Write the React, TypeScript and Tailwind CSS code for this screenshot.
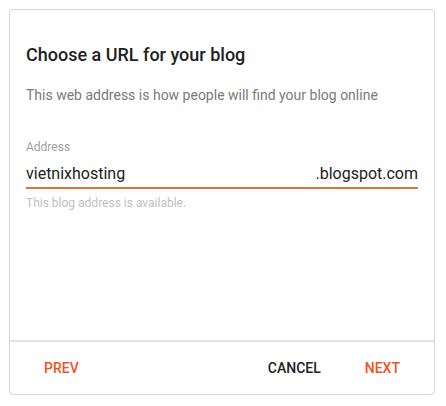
import React from "react";

export default function App() {
  return (
    <div className="w-[446px] h-[406px] bg-white pt-[9px] pl-[9px]" style={{ fontFamily: "Roboto, 'Liberation Sans', sans-serif" }}>
      <div className="w-[426px] h-[386px] border border-[#d6d6d6] rounded-[4px] flex flex-col bg-white">
        <div className="flex-1 pt-[33px] px-4">
          <h1 className="text-[18px] leading-[24px] font-medium text-[#212121]">Choose a URL for your blog</h1>
          <p className="mt-[18px] text-[14px] leading-[20px] text-[#7a7a7a]">This web address is how people will find your blog online</p>
          <div className="mt-[34px] text-[12px] leading-[16px] text-[#a0a0a0]">Address</div>
          <div className="mt-[7px] flex justify-between items-center h-[25px] pb-[1px] text-[16px] leading-[24px] text-[#212121]">
            <span>vietnixhosting</span>
            <span>.blogspot.com</span>
          </div>
          <div className="h-[2px] bg-[#d9763f]" />
          <div className="mt-[6px] text-[12px] leading-[16px] text-[#c0c0c0]">This blog address is available.</div>
        </div>
        <div className="h-[54px] border-t-2 border-[#e4e4e4] flex items-center px-4 text-[14px] leading-[20px] font-medium">
          <button className="px-[18px] text-[#f4511e]">PREV</button>
          <div className="flex-1" />
          <button className="px-[18px] text-[#212121]">CANCEL</button>
          <button className="ml-2 px-[18px] text-[#f4511e]">NEXT</button>
        </div>
      </div>
    </div>
  );
}
